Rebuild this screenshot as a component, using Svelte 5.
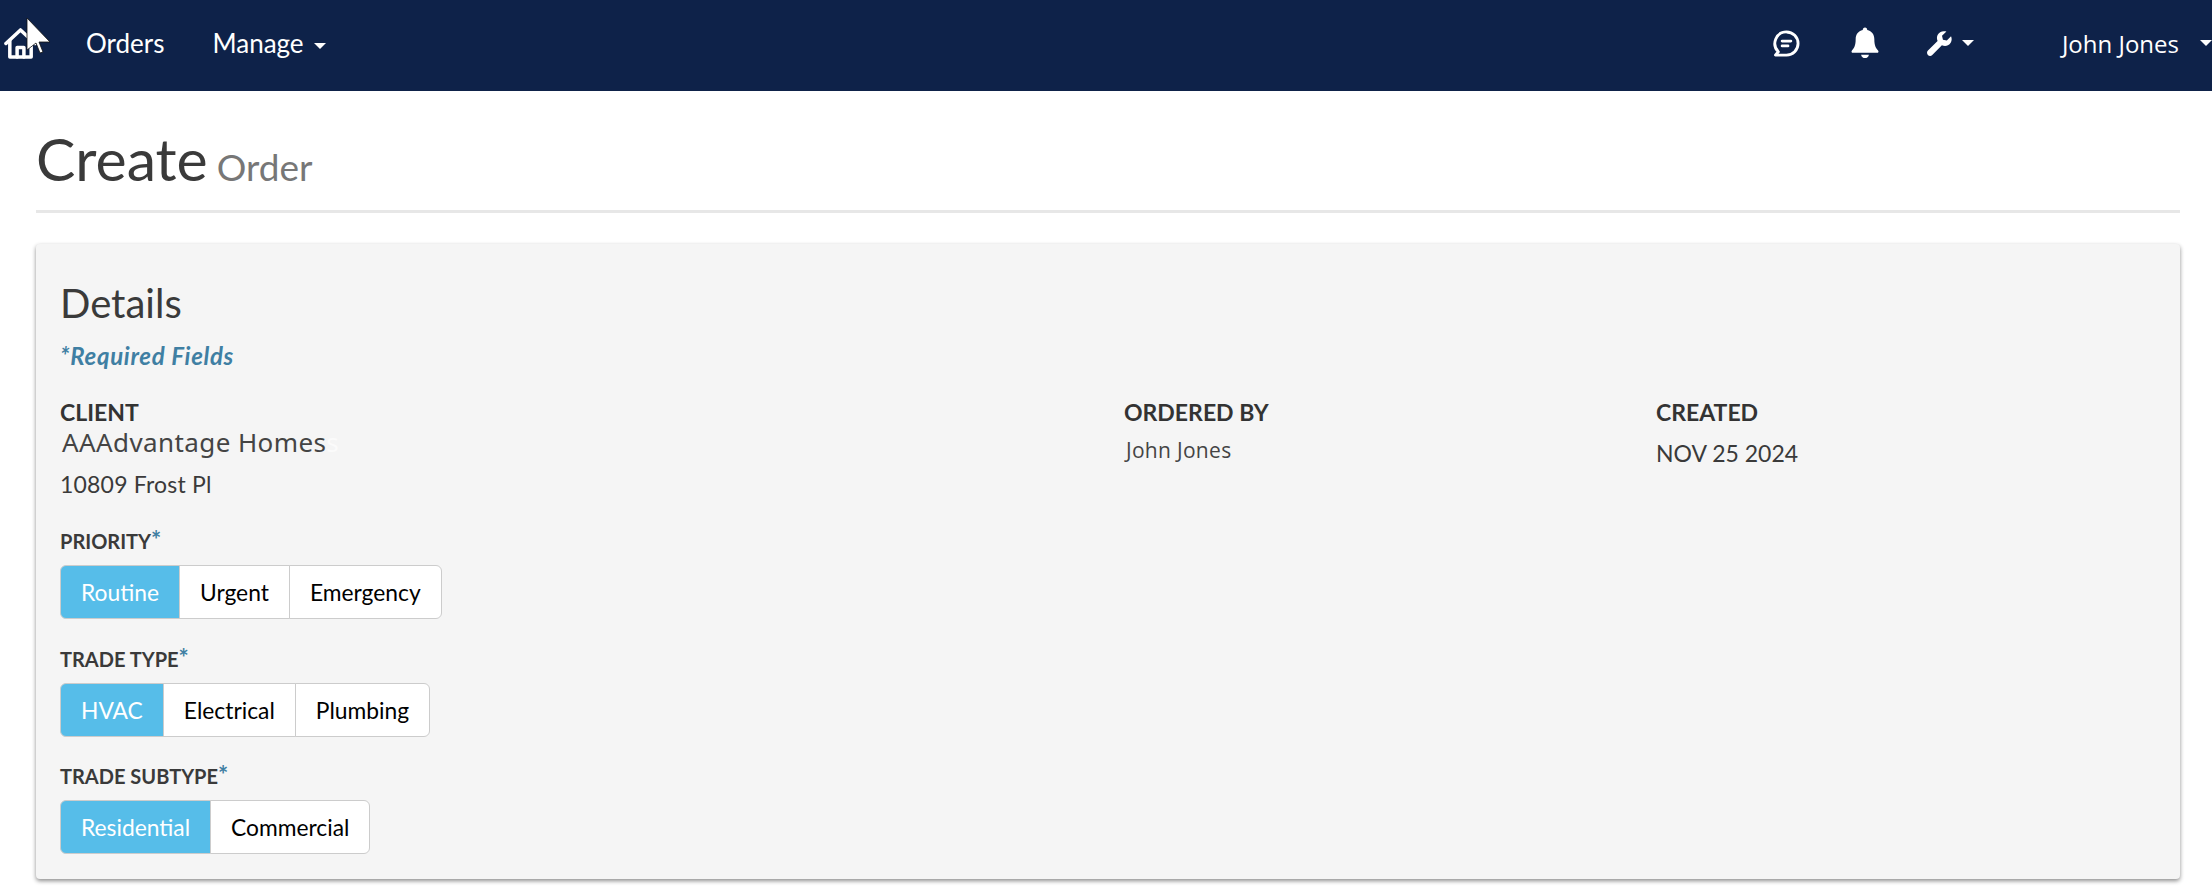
<script>
    const groups = [
        { label: "PRIORITY", options: ["Routine", "Urgent", "Emergency"] },
        { label: "TRADE TYPE", options: ["HVAC", "Electrical", "Plumbing"] },
        { label: "TRADE SUBTYPE", options: ["Residential", "Commercial"] }
    ];
</script>

<nav class="navbar">
    <a class="home" href="#top" aria-label="Home">
        <svg width="33" height="33" viewBox="0 0 34 34" fill="none" stroke="#fff" stroke-width="3.6" stroke-linejoin="round" stroke-linecap="round">
            <path d="M2 17 L17 3 L32 17"/>
            <path d="M6 14 V31 H28 V14"/>
            <path d="M13.5 31 V21 H20.5 V31"/>
        </svg>
    </a>
    <a class="link orders" href="#top">Orders</a>
    <a class="link" href="#top">Manage <span class="caret"></span></a>

    <div class="right">
        <svg class="chat" width="27" height="27" viewBox="0 0 28 28" fill="none" stroke="#fff" stroke-width="3" stroke-linecap="round" stroke-linejoin="round">
            <path d="M14 2 A12 12 0 1 1 14 26 H2.5 L5.5 22.5 A12 12 0 0 1 14 2 Z"/>
            <path d="M9.5 11.5 H18.5 M9.5 16.5 H15.5"/>
        </svg>
        <svg class="bell" width="28" height="32" viewBox="0 0 30 33" fill="#fff">
            <path d="M15 0 C13.5 0 12.6 1 12.6 2.6 C7.6 3.7 5 7.5 5 12.5 C5 19 3.5 22 1 24.5 C0 25.8 0.6 27 2 27 H28 C29.4 27 30 25.8 29 24.5 C26.5 22 25 19 25 12.5 C25 7.5 22.4 3.7 17.4 2.6 C17.4 1 16.5 0 15 0 Z"/>
            <path d="M10.8 29 H19.2 C18.8 31.4 17 32.6 15 32.6 C13 32.6 11.2 31.4 10.8 29 Z"/>
        </svg>
        <div class="tools">
            <svg width="25" height="25" viewBox="0 0 26 26" fill="#fff">
                <path d="M25 5.5 L20.6 9.9 L16.6 9 L15.6 5 L20.2 0.6 C16.6 -0.7 12.6 0.8 11 4.2 C10 6.3 10.2 8.5 11 10.4 L1 20.4 C-0.3 21.8 -0.3 23.6 0.9 24.9 C2.2 26.2 4.2 26.2 5.5 24.9 L15.5 14.9 C17.5 15.8 19.8 15.9 21.8 14.9 C25.2 13.2 26.6 9.2 25 5.5 Z"/>
            </svg>
            <span class="caret"></span>
        </div>
        <a class="user" href="#top">John Jones</a>
        <span class="caret usercaret"></span>
    </div>
</nav>

<svg class="cursor" width="26" height="38" viewBox="0 0 26 38">
    <path d="M1 1 V33 L10 26 L14 36 L17 35 L13 25 H24 Z" fill="#fff" stroke="#111" stroke-width="0.8"/>
</svg>

<main class="content">
    <header class="pagehead">
        <h1>Create <small>Order</small></h1>
    </header>

    <section class="card">
        <h2>Details</h2>
        <p class="required">*Required Fields</p>

        <div class="info">
            <div>
                <div class="title">CLIENT</div>
                <div class="clientname">AAAdvantage Homes<span class="ghost">s</span></div>
                <div class="address">10809 Frost Pl</div>
            </div>
            <div>
                <div class="title">ORDERED BY</div>
                <div class="orderedby">John Jones</div>
            </div>
            <div>
                <div class="title">CREATED</div>
                <div class="created">NOV 25 2024</div>
            </div>
        </div>

        {#each groups as group}
            <div class="field">
                <div class="fieldlabel">{group.label}<span class="star">*</span></div>
                <div class="btngroup">
                    {#each group.options as option, i}
                        <button class:active={i == 0}>{option}</button>
                    {/each}
                </div>
            </div>
        {/each}
    </section>
</main>

<style>
    :global(body) {
        margin: 0;
        background: #fff;
        font-family: "Lato", "Noto Sans", sans-serif;
        color: #333;
    }

    .navbar {
        height: 91px;
        background: #0e2249;
        display: flex;
        align-items: center;
        padding-left: 4px;
        box-sizing: border-box;
        color: #fff;
        overflow: hidden;
    }

    .home {
        display: flex;
        width: 82px;
        margin-top: -5px;
    }

    .link {
        color: #fff;
        text-decoration: none;
        font-size: 26px;
        margin-top: -6px;
        margin-right: 48px;
    }

    .caret {
        display: inline-block;
        width: 0;
        height: 0;
        border-left: 6px solid transparent;
        border-right: 6px solid transparent;
        border-top: 6px solid #fff;
        vertical-align: middle;
        margin-left: 4px;
    }

    .right {
        margin-left: auto;
        margin-top: -5px;
        display: flex;
        align-items: center;
    }

    .chat {
        margin-right: 51px;
    }

    .bell {
        margin-right: 48px;
    }

    .tools {
        display: flex;
        align-items: center;
        gap: 10px;
        width: 135px;
    }

    .tools .caret {
        margin-left: 0;
    }

    .user {
        font-family: "Open Sans", sans-serif;
        color: #fff;
        text-decoration: none;
        font-size: 24px;
    }

    .usercaret {
        margin-left: 21px;
        margin-right: 0;
    }

    .cursor {
        position: absolute;
        left: 26px;
        top: 17px;
    }

    .content {
        padding: 0 32px 11px 36px;
    }

    .pagehead {
        height: 119px;
        border-bottom: 3px solid #e7e7e7;
        display: flex;
        align-items: flex-end;
    }

    h1 {
        margin: 0 0 8px;
        font-size: 59px;
        font-weight: 400;
        line-height: 70px;
        color: #3a3a3a;
        word-spacing: -6px;
    }

    small {
        font-size: 37px;
        color: #777;
    }

    .card {
        margin-top: 31px;
        background: #f5f5f5;
        border-radius: 4px;
        box-shadow: 0 2px 4px rgba(0, 0, 0, 0.45);
        padding: 36px 24px 25px;
        height: 635px;
        box-sizing: border-box;
    }

    h2 {
        margin: 0;
        font-size: 40px;
        line-height: 46px;
        font-weight: 400;
        color: #3a3a3a;
    }

    .required {
        margin: 16px 0 0;
        font-size: 24px;
        line-height: 28px;
        letter-spacing: 0.7px;
        font-style: italic;
        font-weight: 700;
        color: #3f7fa3;
    }

    .info {
        display: grid;
        grid-template-columns: 2fr 1fr 1fr;
        width: 2128px;
        margin-top: 28px;
        height: 103.4px;
    }

    .title {
        font-size: 23px;
        line-height: 28px;
        font-weight: 700;
        color: #333;
    }

    .clientname {
        font-family: "Noto Sans", sans-serif;
        font-size: 26px;
        line-height: 30px;
        letter-spacing: 0.4px;
        margin-top: 1px;
        padding-left: 2px;
        color: #444;
    }

    .ghost {
        color: #fbfbfb;
    }

    .address {
        font-size: 23px;
        line-height: 28px;
        letter-spacing: 0.2px;
        margin-top: 13px;
        color: #3a3a3a;
    }

    .orderedby {
        font-family: "Open Sans", sans-serif;
        font-size: 21px;
        line-height: 28px;
        letter-spacing: 0.3px;
        margin-top: 10px;
        padding-left: 2px;
        color: #444;
    }

    .created {
        font-size: 23px;
        line-height: 28px;
        margin-top: 13px;
        color: #3a3a3a;
    }

    .field {
        margin-top: 26.6px;
    }

    .fieldlabel {
        font-size: 20px;
        line-height: 26px;
        font-weight: 700;
        color: #3a3a3a;
    }

    .star {
        color: #3f7fa3;
        font-size: 24px;
        line-height: 0;
    }

    .btngroup {
        display: inline-flex;
        margin-top: 11px;
        vertical-align: top;
    }

    button {
        height: 54px;
        padding: 0 20px;
        margin-left: -1px;
        border: 1px solid #ccc;
        background: #fff;
        color: #000;
        font-family: "Lato", sans-serif;
        font-size: 22.8px;
    }

    button:first-child {
        margin-left: 0;
        border-radius: 6px 0 0 6px;
    }

    button:last-child {
        border-radius: 0 6px 6px 0;
    }

    button.active {
        background: #56bde9;
        color: #fff;
    }
</style>
